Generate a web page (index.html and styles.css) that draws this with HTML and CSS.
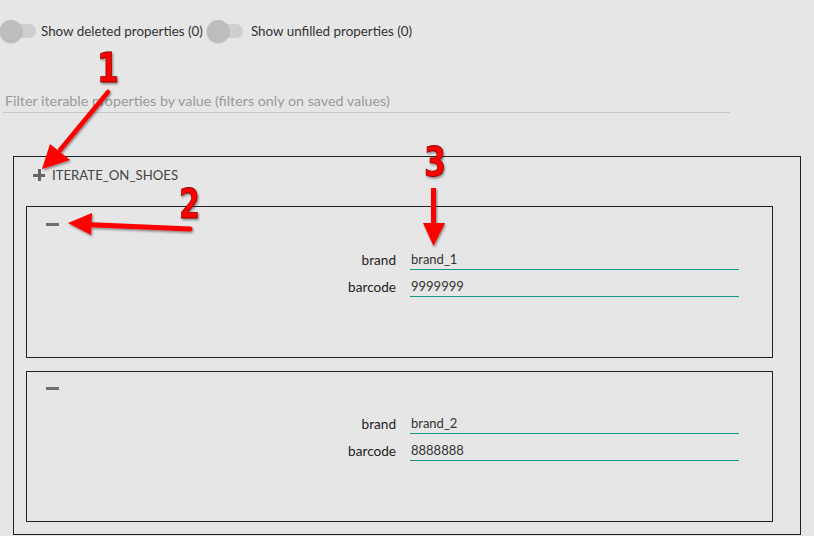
FILE: index.html
```html
<!DOCTYPE html>
<html>
<head>
<meta charset="utf-8">
<link rel="stylesheet" href="styles.css">
</head>
<body>
<div class="page">
  <div class="toggles">
    <label class="toggle">
      <span class="switch"><span class="knob"></span></span>
      <span class="toggle-text">Show deleted properties (0)</span>
    </label>
    <label class="toggle">
      <span class="switch"><span class="knob"></span></span>
      <span class="toggle-text">Show unfilled properties (0)</span>
    </label>
  </div>

  <div class="filter">
    <input class="filter-input" type="text" placeholder="Filter iterable properties by value (filters only on saved values)">
  </div>

  <div class="group">
    <div class="group-header">
      <span class="icon-plus"></span>
      <span class="group-title">ITERATE_ON_SHOES</span>
    </div>

    <div class="item">
      <div class="item-header"><span class="icon-minus"></span></div>
      <div class="fields">
        <div class="field-label">brand</div>
        <div class="field-input">brand_1</div>
        <div class="field-label">barcode</div>
        <div class="field-input">9999999</div>
      </div>
    </div>

    <div class="item">
      <div class="item-header"><span class="icon-minus"></span></div>
      <div class="fields">
        <div class="field-label">brand</div>
        <div class="field-input">brand_2</div>
        <div class="field-label">barcode</div>
        <div class="field-input">8888888</div>
      </div>
    </div>
  </div>
</div>

<svg class="annotations" width="814" height="536" viewBox="0 0 814 536" xmlns="http://www.w3.org/2000/svg">
  <defs>
    <filter id="sh" x="-20%" y="-20%" width="140%" height="140%">
      <feDropShadow dx="1" dy="1.5" stdDeviation="1" flood-color="#000" flood-opacity="0.45"/>
    </filter>
  </defs>
  <g filter="url(#sh)" fill="#ff0000">
    <line x1="108" y1="92" x2="60" y2="150" stroke="#ff0000" stroke-width="4.5" stroke-linecap="round"/>
    <polygon points="42,169 50,144 70,160"/>
    <line x1="190" y1="229" x2="86" y2="224.5" stroke="#ff0000" stroke-width="5" stroke-linecap="round"/>
    <polygon points="68,223 92,213 91,235"/>
    <line x1="433.5" y1="188" x2="433.5" y2="228" stroke="#ff0000" stroke-width="5"/>
    <polygon points="433.5,246 423,223 445,223"/>
  </g>
  <g class="num" filter="url(#sh)">
    <text x="97" y="82" textLength="22" lengthAdjust="spacingAndGlyphs">1</text>
    <text x="179" y="218" textLength="21" lengthAdjust="spacingAndGlyphs">2</text>
    <text x="424" y="176" textLength="22" lengthAdjust="spacingAndGlyphs">3</text>
  </g>
</svg>
</body>
</html>
```

FILE: styles.css
```css
html, body {
  margin: 0;
  padding: 0;
}
body {
  background: #e6e6e6;
  font-family: Lato, "Open Sans", sans-serif;
  color: #333;
  width: 814px;
  height: 536px;
  overflow: hidden;
  position: relative;
}
.page {
  padding-top: 20px;
}
.toggles {
  display: flex;
  align-items: center;
  height: 22px;
}
.toggle {
  display: flex;
  align-items: center;
  font-size: 13.4px;
  color: #333;
}
.toggle + .toggle {
  margin-left: 4px;
}
.switch {
  position: relative;
  display: block;
  width: 34px;
  height: 14px;
  margin-left: 2px;
  border-radius: 7px;
  background: #cfcfcf;
}
.knob {
  position: absolute;
  left: -2px;
  top: -4px;
  width: 22px;
  height: 22px;
  border-radius: 50%;
  background: #bdbdbd;
  box-shadow: 0 1px 2px rgba(0,0,0,0.25);
}
.toggle-text {
  margin-left: 5px;
}
.toggle + .toggle .toggle-text {
  margin-left: 8px;
}
.filter {
  margin: 46px 0 0 3px;
  width: 727px;
}
.filter-input {
  display: block;
  box-sizing: border-box;
  width: 727px;
  height: 25px;
  padding: 0 0 0 2px;
  margin: 0;
  border: none;
  border-bottom: 1px solid #c9c9c9;
  background: transparent;
  font-family: Lato, "Open Sans", sans-serif;
  font-size: 14.3px;
  color: #333;
  outline: none;
}
.filter-input::placeholder {
  color: #9a9a9a;
}
.group {
  box-sizing: border-box;
  margin: 43px 0 0 13px;
  width: 788px;
  border: 1px solid #222;
  padding: 8px 0 12px 12px;
}
.group-header {
  display: flex;
  align-items: center;
  height: 20px;
  padding-left: 7px;
}
.icon-plus {
  position: relative;
  display: block;
  width: 12px;
  height: 12px;
}
.icon-plus::before,
.icon-plus::after {
  content: "";
  position: absolute;
  background: #666;
}
.icon-plus::before {
  left: 0;
  top: 4.5px;
  width: 12px;
  height: 3px;
}
.icon-plus::after {
  left: 4.5px;
  top: 0;
  width: 3px;
  height: 12px;
}
.group-title {
  margin-left: 7px;
  font-size: 13.2px;
  color: #444;
}
.item {
  box-sizing: border-box;
  margin-top: 21px;
  width: 747px;
  height: 152px;
  border: 1px solid #222;
  padding: 16px 0 0 19px;
}
.item + .item {
  margin-top: 13px;
  height: 151px;
  padding-top: 15px;
}
.item-header {
  height: 3px;
  display: flex;
}
.icon-minus {
  display: block;
  width: 13px;
  height: 3px;
  background: #6f6f6f;
}
.fields {
  display: grid;
  grid-template-columns: 350px 329px;
  grid-auto-rows: 27px;
  column-gap: 14px;
  margin-top: 21px;
}
.field-label {
  text-align: right;
  font-size: 13.6px;
  line-height: 26px;
  color: #222;
}
.field-input {
  box-sizing: border-box;
  margin-top: 4px;
  height: 19px;
  line-height: 17px;
  padding-left: 1px;
  border-bottom: 1px solid #15968a;
  font-size: 13px;
  color: #333;
}
.annotations {
  position: absolute;
  left: 0;
  top: 0;
  pointer-events: none;
}
.num text {
  font-family: "DejaVu Sans", sans-serif;
  font-weight: bold;
  font-size: 40px;
  fill: #ff0000;
  stroke: #8a0000;
  stroke-width: 0.8px;
}
```
